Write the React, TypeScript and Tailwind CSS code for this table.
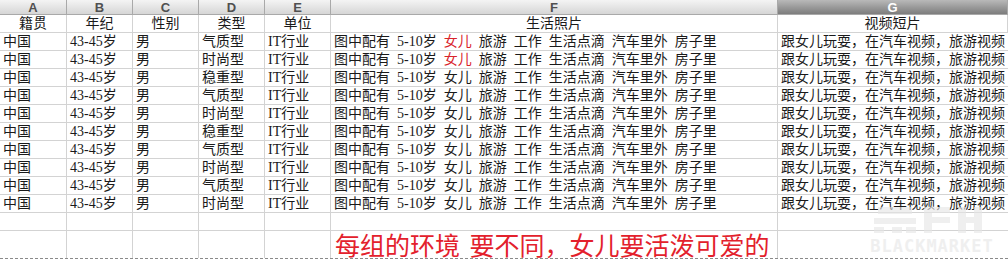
const cols = ["A", "B", "C", "D", "E", "F", "G"];
const widths = ["w-[67px]", "w-[66px]", "w-[66px]", "w-[66px]", "w-[66px]", "w-[447px]", "flex-1"];
const titles = ["籍贯", "年纪", "性别", "类型", "单位", "生活照片", "视频短片"];
const types = ["气质型", "时尚型", "稳重型", "气质型", "时尚型", "稳重型", "气质型", "时尚型", "气质型", "时尚型"];

function Photo({ red }: { red: boolean }) {
  return (
    <span className="[word-spacing:3.5px]">
      图中配有 5-10岁 <span className={red ? "text-[#d9232b]" : ""}>女儿</span> 旅游 工作 生活点滴 汽车里外 房子里
    </span>
  );
}

export default function App() {
  return (
    <div
      className="relative w-[1008px] h-[261px] overflow-hidden bg-white text-[14px] text-[#1a1a1a]"
      style={{ fontFamily: '"Liberation Serif", "Noto Sans CJK SC", serif' }}
    >
      {/* column letters */}
      <div className="flex h-[15px]">
        {cols.map((c, i) => (
          <div
            key={c}
            className={`${widths[i]} box-border flex items-center justify-center border-r border-b border-[#a9a9a9] text-[13px] font-bold leading-none ${
              c === "G"
                ? "bg-gradient-to-b from-[#b9b9b9] to-[#7d7d7d] text-white"
                : "bg-gradient-to-b from-[#f4f4f4] to-[#d6d6d6] text-[#505050]"
            }`}
            style={{ fontFamily: '"Liberation Sans", Arial, sans-serif' }}
          >
            {c}
          </div>
        ))}
      </div>

      {/* titles */}
      <div className="flex h-[18px]">
        {titles.map((t, i) => (
          <div
            key={t}
            className={`${widths[i]} box-border flex items-center justify-center border-r border-b border-[#d3d3d3] leading-none`}
          >
            {t}
          </div>
        ))}
      </div>

      {types.map((ty, r) => (
        <div key={r} className="flex h-[18px] leading-none">
          <div className="w-[67px] box-border flex items-center pl-[3px] border-r border-b border-[#d3d3d3]">中国</div>
          <div className="w-[66px] box-border flex items-center pl-[3px] border-r border-b border-[#d3d3d3]">43-45岁</div>
          <div className="w-[66px] box-border flex items-center pl-[3px] border-r border-b border-[#d3d3d3]">男</div>
          <div className="w-[66px] box-border flex items-center pl-[3px] border-r border-b border-[#d3d3d3]">{ty}</div>
          <div className="w-[66px] box-border flex items-center pl-[3px] border-r border-b border-[#d3d3d3]">IT行业</div>
          <div className="w-[447px] box-border flex items-center pl-[3px] border-r border-b border-[#d3d3d3] whitespace-nowrap">
            <Photo red={r < 2} />
          </div>
          <div className="flex-1 box-border flex items-center pl-[3px] border-b border-[#d3d3d3] whitespace-nowrap">
            跟女儿玩耍，在汽车视频，旅游视频
          </div>
        </div>
      ))}

      {/* empty row */}
      <div className="flex h-[18px]">
        {widths.map((w, i) => (
          <div key={i} className={`${w} box-border border-b border-[#d3d3d3] ${i < 6 ? "border-r" : ""}`} />
        ))}
      </div>

      {/* note row */}
      <div className="flex h-[28px] border-b border-dashed border-[#8a8a8a]">
        {widths.map((w, i) => (
          <div key={i} className={`${w} box-border flex items-center ${i < 6 ? "border-r border-[#d3d3d3]" : ""}`}>
            {i === 5 && (
              <span
                className="pl-[4px] text-[25px] leading-none whitespace-nowrap text-[#e3212c] [word-spacing:4px]"
                style={{ fontFamily: '"Noto Sans CJK SC", sans-serif' }}
              >
                每组的环境 要不同，女儿要活泼可爱的
              </span>
            )}
          </div>
        ))}
      </div>

      {/* watermark */}
      <div className="pointer-events-none absolute left-[868px] top-[203px] flex w-[128px] flex-col items-center opacity-60">
        <svg width="124" height="30" viewBox="0 0 124 30">
          <g fill="#e6e6e6">
            <rect x="8" y="4" width="34" height="7" />
            <rect x="4" y="15" width="42" height="6" />
            <rect x="4" y="24" width="10" height="6" />
            <rect x="22" y="24" width="10" height="6" />
            <rect x="36" y="24" width="10" height="6" />
            <rect x="54" y="4" width="26" height="6" />
            <rect x="54" y="14" width="26" height="6" />
            <rect x="54" y="4" width="8" height="26" />
            <rect x="88" y="4" width="8" height="26" />
            <rect x="104" y="4" width="8" height="26" />
            <rect x="88" y="14" width="24" height="6" />
          </g>
        </svg>
        <span
          className="mt-[5px] text-[17px] font-bold leading-none tracking-[1px] text-[#e6e6e6]"
          style={{ fontFamily: '"DejaVu Sans Mono", monospace' }}
        >
          BLACKMARKET
        </span>
      </div>
    </div>
  );
}
